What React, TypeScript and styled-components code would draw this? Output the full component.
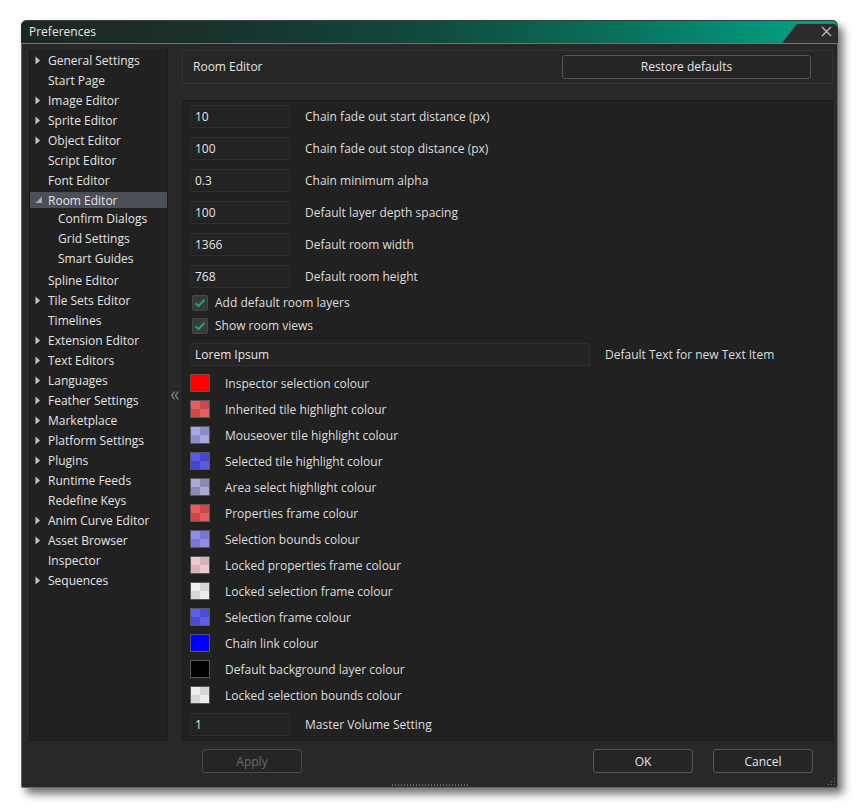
import React from "react";
import styled, { createGlobalStyle } from "styled-components";

const GlobalStyle = createGlobalStyle`
  html, body { margin: 0; padding: 0; background: #ffffff; }
  body { font-family: "Open Sans", "Liberation Sans", sans-serif; font-size: 12px; }
  * { box-sizing: border-box; }
`;

const Page = styled.div`
  padding: 20px 0 0 21px;
  width: 860px;
  height: 809px;
`;

const Window = styled.div`
  position: relative;
  width: 817px;
  height: 768px;
  display: flex;
  flex-direction: column;
  background: #282828;
  border-radius: 6px 6px 3px 3px;
  box-shadow: 5px 6px 8px rgba(0, 0, 0, 0.55);
`;

const TitleBar = styled.div`
  height: 24px;
  display: flex;
  align-items: stretch;
  justify-content: space-between;
  padding-left: 8px;
  border-radius: 6px 6px 0 0;
  border-top: 1px solid #3c3c3c;
  border-bottom: 1px solid #1fa070;
  background: linear-gradient(
    90deg,
    #1f2624 0%,
    #18332d 25%,
    #104a3e 50%,
    #0a6e5a 72%,
    #03977a 92%,
    #00a081 100%
  );
`;

const Title = styled.span`
  align-self: center;
  color: #e6e6e6;
  font-size: 12px;
  line-height: 14px;
  margin-top: -1px;
`;

const CloseArea = styled.div`
  align-self: flex-end;
  width: 56px;
  height: 19px;
  background: #2b2b2b;
  clip-path: polygon(15px 0, 100% 0, 100% 100%, 0 100%);
  display: flex;
  align-items: center;
  justify-content: flex-end;
  padding: 0 6px 4px 0;
  border-top-right-radius: 5px;
`;

const Body = styled.div`
  flex: 1;
  display: grid;
  grid-template-columns: 139px 14px 651px;
  grid-template-rows: 691px 1fr;
  padding: 6px 4px 0 7px;
  border: 1px solid #1b8c5e;
  border-top: none;
  border-radius: 0 0 3px 3px;
`;

const TreePanel = styled.div`
  background: #212121;
  border: 1px solid #1a1a1a;
  overflow: hidden;
`;

const TreeList = styled.div`
  margin-top: -1px;
`;

const TreeRow = styled.div`
  height: 20px;
  padding: 2px 0;
`;

const TreeLabel = styled.div<{ $depth: number; $selected?: boolean }>`
  height: 16px;
  display: flex;
  align-items: center;
  padding-left: ${(p) => 5 + p.$depth * 10}px;
  background: ${(p) => (p.$selected ? "#4b5058" : "transparent")};
  color: #e4e4e4;
  font-size: 12px;
  white-space: nowrap;
`;

const ArrowBox = styled.span`
  width: 13px;
  height: 16px;
  display: flex;
  align-items: center;
  flex-shrink: 0;
`;

const ChildGroup = styled.div`
  margin: -2px 0 2px;
`;

const Splitter = styled.div`
  display: flex;
  align-items: center;
  justify-content: center;
`;

const RightCol = styled.div`
  display: flex;
  flex-direction: column;
  gap: 16px;
`;

const HeaderPanel = styled.div`
  height: 34px;
  display: flex;
  align-items: center;
  justify-content: space-between;
  padding: 0 21px 1px 10px;
  background: #262626;
  border: 1px solid #353535;
  border-radius: 2px;
  color: #e4e4e4;
`;

const Button = styled.button<{ $width: number; $disabled?: boolean }>`
  width: ${(p) => p.$width}px;
  height: 24px;
  background: #252525;
  border: 1px solid ${(p) => (p.$disabled ? "#484848" : "#555555")};
  border-radius: 3px;
  color: ${(p) => (p.$disabled ? "#6a6a6a" : "#e6e6e6")};
  font-family: "Open Sans", "Liberation Sans", sans-serif;
  font-size: 12px;
  padding: 0;
`;

const ContentPanel = styled.div`
  flex: 1;
  background: #212121;
  border: 1px solid #1b1b1b;
  padding: 4px 7px;
  display: flex;
  flex-direction: column;
`;

const FieldRow = styled.div<{ $mt?: number }>`
  display: flex;
  align-items: center;
  gap: 15px;
  height: 23px;
  margin-top: ${(p) => p.$mt ?? 0}px;
  color: #dedede;
  white-space: nowrap;
`;

const TextInput = styled.div<{ $width: number }>`
  width: ${(p) => p.$width}px;
  height: 23px;
  display: flex;
  align-items: center;
  padding-left: 4px;
  background: #232323;
  border: 1px solid #2f2f2f;
  border-radius: 2px;
  color: #e6e6e6;
`;

const CheckRow = styled.div<{ $mt?: number }>`
  display: flex;
  align-items: center;
  gap: 7px;
  height: 23px;
  margin-top: ${(p) => p.$mt ?? 0}px;
  padding-left: 2px;
  color: #dedede;
`;

const CheckBox = styled.span`
  width: 16px;
  height: 16px;
  display: flex;
  align-items: center;
  justify-content: center;
  background: #3a3a3a;
  border: 1px solid #474747;
  border-radius: 2px;
`;

const SwatchRow = styled.div`
  display: flex;
  align-items: center;
  gap: 15px;
  height: 26px;
  color: #dedede;
`;

const Swatch = styled.span<{ $a: string; $b: string }>`
  width: 20px;
  height: 18px;
  border: 1px solid #575757;
  background: conic-gradient(
    ${(p) => p.$b} 0 25%,
    ${(p) => p.$a} 0 50%,
    ${(p) => p.$b} 0 75%,
    ${(p) => p.$a} 0
  );
`;

const SwatchGroup = styled.div`
  margin-top: 4px;
  display: flex;
  flex-direction: column;
`;

const Footer = styled.div`
  grid-column: 3;
  display: flex;
  align-items: flex-start;
  gap: 20px;
  padding: 8px 20px 0 20px;
`;

const Spacer = styled.div`
  flex: 1;
`;

const BottomGrip = styled.div`
  position: absolute;
  left: 371px;
  bottom: 2px;
  width: 77px;
  height: 2px;
  background: repeating-linear-gradient(90deg, #6a6a6a 0 1px, transparent 1px 3px);
`;

const CornerGrip = styled.div`
  position: absolute;
  right: 2px;
  bottom: 2px;
  width: 9px;
  height: 9px;
  display: flex;
`;

type TreeItem = { label: string; arrow?: boolean; expanded?: boolean; selected?: boolean; children?: string[] };

const tree: TreeItem[] = [
  { label: "General Settings", arrow: true },
  { label: "Start Page" },
  { label: "Image Editor", arrow: true },
  { label: "Sprite Editor", arrow: true },
  { label: "Object Editor", arrow: true },
  { label: "Script Editor" },
  { label: "Font Editor" },
  {
    label: "Room Editor",
    arrow: true,
    expanded: true,
    selected: true,
    children: ["Confirm Dialogs", "Grid Settings", "Smart Guides"],
  },
  { label: "Spline Editor" },
  { label: "Tile Sets Editor", arrow: true },
  { label: "Timelines" },
  { label: "Extension Editor", arrow: true },
  { label: "Text Editors", arrow: true },
  { label: "Languages", arrow: true },
  { label: "Feather Settings", arrow: true },
  { label: "Marketplace", arrow: true },
  { label: "Platform Settings", arrow: true },
  { label: "Plugins", arrow: true },
  { label: "Runtime Feeds", arrow: true },
  { label: "Redefine Keys" },
  { label: "Anim Curve Editor", arrow: true },
  { label: "Asset Browser", arrow: true },
  { label: "Inspector" },
  { label: "Sequences", arrow: true },
];

const numberFields = [
  ["10", "Chain fade out start distance (px)"],
  ["100", "Chain fade out stop distance (px)"],
  ["0.3", "Chain minimum alpha"],
  ["100", "Default layer depth spacing"],
  ["1366", "Default room width"],
  ["768", "Default room height"],
];

const swatches: [string, string, string][] = [
  ["#ff0000", "#ff0000", "Inspector selection colour"],
  ["#e26060", "#c94b4b", "Inherited tile highlight colour"],
  ["#a8a8e0", "#8c8ccc", "Mouseover tile highlight colour"],
  ["#5a5ae4", "#4646cc", "Selected tile highlight colour"],
  ["#aaaad2", "#8a8ab4", "Area select highlight colour"],
  ["#e45c5c", "#cc4848", "Properties frame colour"],
  ["#8e8ee6", "#7878d2", "Selection bounds colour"],
  ["#eccaca", "#d9b3b3", "Locked properties frame colour"],
  ["#ececec", "#d6d6d6", "Locked selection frame colour"],
  ["#5e5ee6", "#4c4cd4", "Selection frame colour"],
  ["#0000ff", "#0000ff", "Chain link colour"],
  ["#000000", "#000000", "Default background layer colour"],
  ["#ececec", "#d6d6d6", "Locked selection bounds colour"],
];

const RightArrow = () => (
  <svg width="6" height="9" viewBox="0 0 6 9">
    <path d="M0.5 0.5 L5 4.5 L0.5 8.5 Z" fill="#c4c4c4" />
  </svg>
);

const ExpandedArrow = () => (
  <svg width="8" height="8" viewBox="0 0 8 8">
    <path d="M7 0.5 L7 7 L0.5 7 Z" fill="#a8a8a8" />
  </svg>
);

const Check = () => (
  <svg width="12" height="10" viewBox="0 0 12 10">
    <path d="M1.5 5.2 L4.6 8 L10.5 1.8" fill="none" stroke="#1fa36b" strokeWidth="2" />
  </svg>
);

const CloseIcon = () => (
  <svg width="11" height="11" viewBox="0 0 11 11">
    <path d="M1 1 L10 10 M10 1 L1 10" stroke="#bdbdbd" strokeWidth="1.3" />
  </svg>
);

const Chevrons = () => (
  <svg width="8" height="9" viewBox="0 0 8 9">
    <path d="M3.5 0.5 L0.8 4.5 L3.5 8.5 M7.2 0.5 L4.5 4.5 L7.2 8.5" fill="none" stroke="#8a8a8a" strokeWidth="1.3" />
  </svg>
);

const CornerDots = () => (
  <svg width="9" height="9" viewBox="0 0 9 9">
    {[
      [7, 1],
      [7, 4],
      [4, 4],
      [7, 7],
      [4, 7],
      [1, 7],
    ].map(([x, y], i) => (
      <rect key={i} x={x} y={y} width="1" height="1" fill="#6a6a6a" />
    ))}
  </svg>
);

export default function App() {
  return (
    <Page>
      <GlobalStyle />
      <Window>
        <TitleBar>
          <Title>Preferences</Title>
          <CloseArea>
            <CloseIcon />
          </CloseArea>
        </TitleBar>
        <Body>
          <TreePanel>
            <TreeList>
              {tree.map((item) => (
                <React.Fragment key={item.label}>
                  <TreeRow>
                    <TreeLabel $depth={0} $selected={item.selected}>
                      <ArrowBox>
                        {item.arrow ? item.expanded ? <ExpandedArrow /> : <RightArrow /> : null}
                      </ArrowBox>
                      {item.label}
                    </TreeLabel>
                  </TreeRow>
                  {item.children && (
                    <ChildGroup>
                      {item.children.map((c) => (
                        <TreeRow key={c}>
                          <TreeLabel $depth={1}>
                            <ArrowBox />
                            {c}
                          </TreeLabel>
                        </TreeRow>
                      ))}
                    </ChildGroup>
                  )}
                </React.Fragment>
              ))}
            </TreeList>
          </TreePanel>
          <Splitter>
            <Chevrons />
          </Splitter>
          <RightCol>
            <HeaderPanel>
              <span>Room Editor</span>
              <Button $width={249}>Restore defaults</Button>
            </HeaderPanel>
            <ContentPanel>
              {numberFields.map(([v, l], i) => (
                <FieldRow key={l} $mt={i === 0 ? 0 : 9}>
                  <TextInput $width={100}>{v}</TextInput>
                  <span>{l}</span>
                </FieldRow>
              ))}
              <CheckRow $mt={3}>
                <CheckBox>
                  <Check />
                </CheckBox>
                <span>Add default room layers</span>
              </CheckRow>
              <CheckRow>
                <CheckBox>
                  <Check />
                </CheckBox>
                <span>Show room views</span>
              </CheckRow>
              <FieldRow $mt={6}>
                <TextInput $width={400}>Lorem Ipsum</TextInput>
                <span>Default Text for new Text Item</span>
              </FieldRow>
              <SwatchGroup>
                {swatches.map(([a, b, l]) => (
                  <SwatchRow key={l}>
                    <Swatch $a={a} $b={b} />
                    <span>{l}</span>
                  </SwatchRow>
                ))}
              </SwatchGroup>
              <FieldRow $mt={5}>
                <TextInput $width={100}>1</TextInput>
                <span>Master Volume Setting</span>
              </FieldRow>
            </ContentPanel>
          </RightCol>
          <Footer>
            <Button $width={100} $disabled>
              Apply
            </Button>
            <Spacer />
            <Button $width={100}>OK</Button>
            <Button $width={100}>Cancel</Button>
          </Footer>
        </Body>
        <BottomGrip />
        <CornerGrip>
          <CornerDots />
        </CornerGrip>
      </Window>
    </Page>
  );
}
